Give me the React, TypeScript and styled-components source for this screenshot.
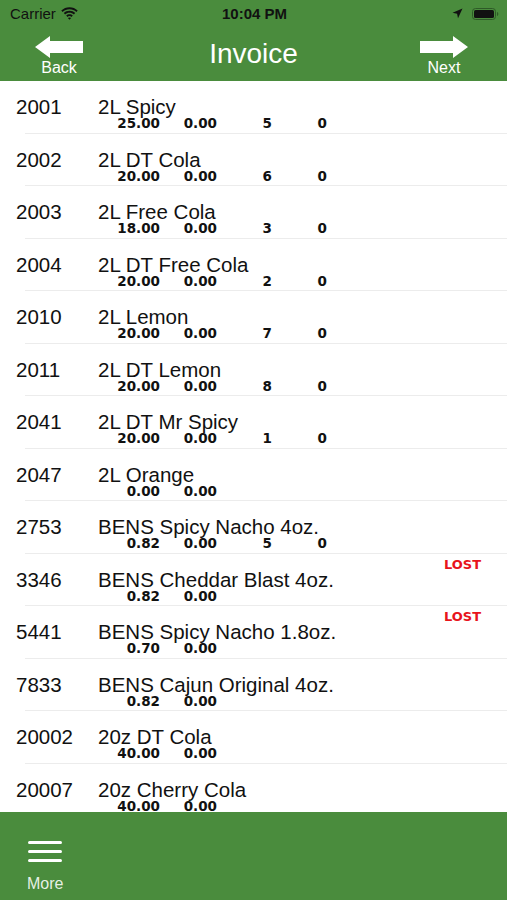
import React from "react";
import styled, { createGlobalStyle } from "styled-components";

const GREEN = "#4a8c3d";

const Global = createGlobalStyle`
  html, body { margin: 0; padding: 0; background: #fff; }
  body { font-family: "Liberation Sans", Arial, sans-serif; }
  * { box-sizing: border-box; }
`;

const Screen = styled.div`
  width: 507px;
  height: 900px;
  display: flex;
  flex-direction: column;
  overflow: hidden;
  background: #fff;
`;

const Top = styled.header`
  background: ${GREEN};
  height: 81px;
  display: flex;
  flex-direction: column;
`;

const StatusBar = styled.div`
  height: 27px;
  display: grid;
  grid-template-columns: 1fr auto 1fr;
  align-items: center;
  padding: 0 8px 0 10px;
  color: #111;
  font-size: 15px;
`;

const StatusLeft = styled.div`
  display: flex;
  align-items: center;
  gap: 5px;
`;

const StatusTime = styled.div`
  font-weight: bold;
  font-size: 15px;
`;

const StatusRight = styled.div`
  display: flex;
  align-items: center;
  justify-content: flex-end;
  gap: 9px;
`;

const NavBar = styled.div`
  flex: 1;
  display: grid;
  grid-template-columns: 115px 1fr 115px;
  align-items: center;
`;

const NavButton = styled.div<{ $side: "left" | "right" }>`
  display: flex;
  flex-direction: column;
  align-items: center;
  justify-self: ${(p) => (p.$side === "left" ? "start" : "end")};
  ${(p) => (p.$side === "left" ? "margin-left: 35px;" : "margin-right: 39px;")}
  color: #fff;
  font-size: 16px;
  margin-top: 5px;
  gap: 1px;
`;

const NavLabel = styled.span`
  line-height: 18px;
`;

const Title = styled.h1`
  margin: 0;
  text-align: center;
  color: #fff;
  font-weight: normal;
  font-size: 28px;
`;

const List = styled.main`
  flex: 1;
  overflow: hidden;
`;

const Row = styled.div`
  position: relative;
  height: 52.5px;
  padding-top: 16px;
  &::after {
    content: "";
    position: absolute;
    left: 25px;
    right: 0;
    bottom: 0;
    height: 1px;
    background: #ececec;
  }
`;

const MainLine = styled.div`
  display: grid;
  grid-template-columns: 82px 1fr;
  padding-left: 16px;
  font-size: 20.5px;
  line-height: 20px;
  color: #111;
`;

const SubLine = styled.div`
  display: grid;
  grid-template-columns: 62px 57px 55px 55px;
  padding-left: 98px;
  margin-top: -1px;
  font-family: "DejaVu Sans", "Liberation Sans", sans-serif;
  font-size: 13.5px;
  font-weight: bold;
  line-height: 14px;
  color: #111;
  & > span {
    text-align: right;
  }
`;

const Lost = styled.span`
  position: absolute;
  right: 26px;
  top: 4px;
  color: #e8141c;
  font-family: "DejaVu Sans", "Liberation Sans", sans-serif;
  font-weight: bold;
  font-size: 13px;
  line-height: 14px;
`;

const TabBar = styled.footer`
  background: ${GREEN};
  height: 88px;
  display: flex;
  align-items: flex-start;
  padding: 29px 0 0 27px;
`;

const TabItem = styled.div`
  display: flex;
  flex-direction: column;
  align-items: center;
  gap: 13px;
  color: rgba(255, 255, 255, 0.88);
  font-size: 16px;
  line-height: 18px;
`;

type Item = {
  code: string;
  name: string;
  nums: string[];
  lost?: boolean;
};

const items: Item[] = [
  { code: "2001", name: "2L Spicy", nums: ["25.00", "0.00", "5", "0"] },
  { code: "2002", name: "2L DT Cola", nums: ["20.00", "0.00", "6", "0"] },
  { code: "2003", name: "2L Free Cola", nums: ["18.00", "0.00", "3", "0"] },
  { code: "2004", name: "2L DT Free Cola", nums: ["20.00", "0.00", "2", "0"] },
  { code: "2010", name: "2L Lemon", nums: ["20.00", "0.00", "7", "0"] },
  { code: "2011", name: "2L DT Lemon", nums: ["20.00", "0.00", "8", "0"] },
  { code: "2041", name: "2L DT Mr Spicy", nums: ["20.00", "0.00", "1", "0"] },
  { code: "2047", name: "2L Orange", nums: ["0.00", "0.00"] },
  { code: "2753", name: "BENS Spicy Nacho 4oz.", nums: ["0.82", "0.00", "5", "0"] },
  { code: "3346", name: "BENS Cheddar Blast 4oz.", nums: ["0.82", "0.00"], lost: true },
  { code: "5441", name: "BENS Spicy Nacho 1.8oz.", nums: ["0.70", "0.00"], lost: true },
  { code: "7833", name: "BENS Cajun Original 4oz.", nums: ["0.82", "0.00"] },
  { code: "20002", name: "20z DT Cola", nums: ["40.00", "0.00"] },
  { code: "20007", name: "20z Cherry Cola", nums: ["40.00", "0.00"] },
];

const Wifi = () => (
  <svg width="17" height="13" viewBox="0 0 17 13">
    <path d="M8.5 2.2c2.7 0 5.1 1 6.9 2.7l1.3-1.4C14.5 1.4 11.6.2 8.5.2S2.5 1.4.3 3.5l1.3 1.4C3.4 3.2 5.8 2.2 8.5 2.2z" fill="#111" />
    <path d="M8.5 5.7c1.7 0 3.2.6 4.4 1.7l1.3-1.4C12.7 4.6 10.7 3.8 8.5 3.8S4.3 4.6 2.8 6l1.3 1.4c1.2-1.1 2.7-1.7 4.4-1.7z" fill="#111" />
    <path d="M8.5 9.1c.8 0 1.5.3 2 .8l1.3-1.4C10.9 7.7 9.7 7.2 8.5 7.2S6.1 7.7 5.2 8.5l1.3 1.4c.5-.5 1.2-.8 2-.8zM8.5 12.8l1.6-1.7c-.4-.4-1-.6-1.6-.6s-1.2.2-1.6.6z" fill="#111" />
  </svg>
);

const Location = () => (
  <svg width="11" height="11" viewBox="0 0 11 11">
    <path d="M10.5.5L.5 4.8l4.6.9.9 4.6z" fill="#111" />
  </svg>
);

const Battery = () => (
  <svg width="27" height="12" viewBox="0 0 27 12">
    <rect x="0.5" y="0.5" width="23" height="11" rx="3" fill="none" stroke="#2e5a27" strokeWidth="1" />
    <rect x="2" y="2" width="20" height="8" rx="1.6" fill="#111" />
    <path d="M25 4v4c.8-.3 1.3-1.1 1.3-2s-.5-1.7-1.3-2z" fill="#2e5a27" />
  </svg>
);

const Arrow = ({ dir }: { dir: "left" | "right" }) => (
  <svg width="48" height="22" viewBox="0 0 48 22">
    {dir === "left" ? (
      <path d="M0 11L15 0v5h33v12H15v5z" fill="#fff" />
    ) : (
      <path d="M48 11L33 0v5H0v12h33v5z" fill="#fff" />
    )}
  </svg>
);

const Hamburger = () => (
  <svg width="34" height="21" viewBox="0 0 34 21">
    <rect x="0" y="0" width="34" height="3" rx="1.5" fill="#fff" />
    <rect x="0" y="9" width="34" height="3" rx="1.5" fill="#fff" />
    <rect x="0" y="18" width="34" height="3" rx="1.5" fill="#fff" />
  </svg>
);

export default function App() {
  return (
    <>
      <Global />
      <Screen>
        <Top>
          <StatusBar>
            <StatusLeft>
              <span>Carrier</span>
              <Wifi />
            </StatusLeft>
            <StatusTime>10:04 PM</StatusTime>
            <StatusRight>
              <Location />
              <Battery />
            </StatusRight>
          </StatusBar>
          <NavBar>
            <NavButton $side="left">
              <Arrow dir="left" />
              <NavLabel>Back</NavLabel>
            </NavButton>
            <Title>Invoice</Title>
            <NavButton $side="right">
              <Arrow dir="right" />
              <NavLabel>Next</NavLabel>
            </NavButton>
          </NavBar>
        </Top>
        <List>
          {items.map((it) => (
            <Row key={it.code}>
              <MainLine>
                <span>{it.code}</span>
                <span>{it.name}</span>
              </MainLine>
              <SubLine>
                {it.nums.map((n, i) => (
                  <span key={i}>{n}</span>
                ))}
              </SubLine>
              {it.lost && <Lost>LOST</Lost>}
            </Row>
          ))}
        </List>
        <TabBar>
          <TabItem>
            <Hamburger />
            <span>More</span>
          </TabItem>
        </TabBar>
      </Screen>
    </>
  );
}
